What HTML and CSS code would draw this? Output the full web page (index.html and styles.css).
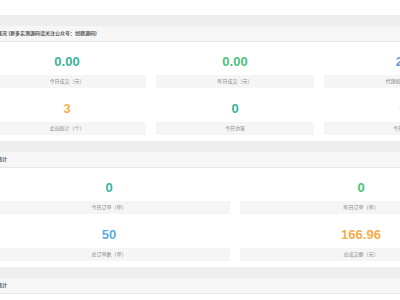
FILE: index.html
```html
<!DOCTYPE html>
<html>
<head>
  <title>数据统计</title>
  <meta charset="UTF-8">
  <link rel="stylesheet" href="styles.css">
</head>
<body>
  <div class="page">

    <div class="panel">
      <div class="panel-title">概况 (更多实测源码请关注公众号：创想源码)</div>
      <div class="stats cols-3">
        <div class="stat">
          <div class="stat-value teal">0.00</div>
          <div class="stat-label">今日成交（元）</div>
        </div>
        <div class="stat">
          <div class="stat-value green">0.00</div>
          <div class="stat-label">昨日成交（元）</div>
        </div>
        <div class="stat">
          <div class="stat-value blue">20</div>
          <div class="stat-label">代理统计（个）</div>
        </div>
        <div class="stat">
          <div class="stat-value orange">3</div>
          <div class="stat-label">会员统计（个）</div>
        </div>
        <div class="stat">
          <div class="stat-value teal">0</div>
          <div class="stat-label">今日访客</div>
        </div>
        <div class="stat">
          <div class="stat-value teal">0</div>
          <div class="stat-label">今日新增</div>
        </div>
      </div>
    </div>

    <div class="panel">
      <div class="panel-title">统计</div>
      <div class="stats cols-2">
        <div class="stat">
          <div class="stat-value teal">0</div>
          <div class="stat-label">今日订单（单）</div>
        </div>
        <div class="stat">
          <div class="stat-value green">0</div>
          <div class="stat-label">昨日订单（单）</div>
        </div>
        <div class="stat">
          <div class="stat-value sky">50</div>
          <div class="stat-label">总订单数（单）</div>
        </div>
        <div class="stat">
          <div class="stat-value orange">166.96</div>
          <div class="stat-label">总成交额（元）</div>
        </div>
      </div>
    </div>

    <div class="panel">
      <div class="panel-title">统计</div>
    </div>

  </div>
</body>
</html>
```

FILE: styles.css
```css
body {
  margin: 0;
  background-color: #ffffff;
  font-family: "Liberation Sans", Arial, "Noto Sans CJK SC", sans-serif;
  overflow: hidden;
}

.page {
  width: 494px;
  margin-left: -12px;
  padding-top: 15px;
}

.panel {
  border-top: 11px solid #eeeeee;
}

.panel-title {
  height: 15px;
  line-height: 15px;
  padding-left: 9px;
  background-color: #f6f6f6;
  border-bottom: 1px solid #e8e8e8;
  font-size: 5px;
  font-weight: bold;
  color: #555555;
  white-space: nowrap;
}

.stats {
  display: grid;
  gap: 11px 10px;
  padding: 10px 0 6px;
}

.cols-3 {
  grid-template-columns: repeat(3, 1fr);
}

.cols-2 {
  grid-template-columns: repeat(2, 1fr);
}

.stat-value {
  height: 20px;
  line-height: 20px;
  text-align: center;
  font-size: 13px;
  font-weight: bold;
}

.stat-label {
  margin-top: 3px;
  height: 13px;
  line-height: 13px;
  background-color: #f5f5f5;
  text-align: center;
  font-size: 5px;
  color: #888888;
}

.teal { color: #36b39b; }
.green { color: #47c27a; }
.blue { color: #6a9bd0; }
.orange { color: #f4ad4b; }
.sky { color: #5cade2; }
```
